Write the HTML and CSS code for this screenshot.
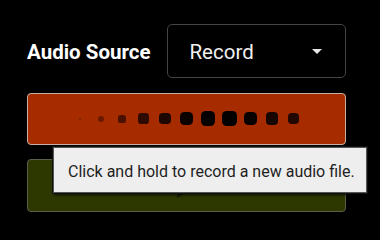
FILE: index.html
```html
<!DOCTYPE html>
<html>
<head>
<meta charset="utf-8">
<link rel="stylesheet" href="styles.css">
</head>
<body>
<div class="panel">
  <div class="row">
    <span class="label">Audio Source</span>
    <div class="select">
      <span class="value">Record</span>
      <span class="caret"></span>
    </div>
  </div>
  <div class="btn rec">
    <span class="slot"><i class="d d1"></i></span>
    <span class="slot"><i class="d d2"></i></span>
    <span class="slot"><i class="d d3"></i></span>
    <span class="slot"><i class="d d4"></i></span>
    <span class="slot"><i class="d d5"></i></span>
    <span class="slot"><i class="d d6"></i></span>
    <span class="slot"><i class="d d7"></i></span>
    <span class="slot"><i class="d d8"></i></span>
    <span class="slot"><i class="d d9"></i></span>
    <span class="slot"><i class="d d10"></i></span>
    <span class="slot"><i class="d d11"></i></span>
  </div>
  <div class="btn play">
    <svg class="playicon" width="20" height="24" viewBox="0 0 20 24"><polygon points="0,0 20,12 0,24" fill="#161c00"/></svg>
  </div>
  <div class="tooltip">Click and hold to record a new audio file.</div>
</div>
</body>
</html>
```
FILE: styles.css
```css
html, body {
  margin: 0;
  padding: 0;
  background: #000;
  width: 380px;
  height: 238px;
  overflow: hidden;
  font-family: Roboto, "Liberation Sans", sans-serif;
}
.panel {
  position: relative;
  padding: 24px 0 0 27px;
  width: 319px;
}
.row {
  display: flex;
  align-items: center;
  height: 54px;
}
.label {
  color: #fff;
  font-weight: bold;
  font-size: 20.5px;
  width: 141px;
  white-space: nowrap;
  padding-top: 1px;
}
.select {
  box-sizing: border-box;
  width: 179px;
  height: 54px;
  border: 1px solid #444;
  border-radius: 5px;
  display: flex;
  align-items: center;
  padding-left: 21px;
  padding-right: 23px;
}
.value {
  color: #f0f0f0;
  font-size: 20.5px;
  flex: 1;
  padding-top: 1px;
}
.caret {
  width: 0;
  height: 0;
  border-left: 5.5px solid transparent;
  border-right: 5.5px solid transparent;
  border-top: 5.5px solid #e8e8e8;
  margin-top: 1px;
}
.btn {
  box-sizing: border-box;
  width: 319px;
  border-radius: 4px;
  display: flex;
  align-items: center;
  justify-content: center;
}
.rec {
  margin-top: 15px;
  height: 52px;
  background: #a62c00;
  border: 1px solid #c8b0a6;
  padding-bottom: 1px;
}
.slot {
  width: 21.4px;
  display: flex;
  justify-content: center;
  align-items: center;
}
.d {
  display: block;
  border-radius: 32%;
}
.d1 { width: 2px; height: 2px; background: #7e2200; }
.d2 { width: 6px; height: 6px; background: #6a1900; border-radius: 50%; }
.d3 { width: 8px; height: 8px; background: #4a1100; }
.d4 { width: 10.5px; height: 10.5px; background: #2e0b00; }
.d5 { width: 11.7px; height: 11.7px; background: #1e0700; }
.d6 { width: 13.3px; height: 13.3px; background: #0c0200; }
.d7 { width: 14.6px; height: 14.6px; background: #050100; }
.d8 { width: 14.6px; height: 14.6px; background: #050100; }
.d9 { width: 13.3px; height: 13.3px; background: #0a0200; }
.d10 { width: 12.7px; height: 12.7px; background: #160500; }
.d11 { width: 11.7px; height: 11.7px; background: #220800; }
.play {
  margin-top: 14px;
  height: 53px;
  background: #2d3800;
  border: 1px solid #5c5e4c;
}
.playicon {
  display: block;
  margin-top: 1px;
}
.tooltip {
  position: absolute;
  left: 53px;
  top: 147px;
  box-sizing: border-box;
  width: 314px;
  height: 46px;
  background: #eeeeee;
  border: 1px solid #555;
  box-shadow: 0 0 0 1px #111, 1px 2px 3px rgba(0,0,0,0.8);
  color: #1e1e1e;
  font-size: 16px;
  line-height: 18px;
  padding: 15px 0 0 14px;
  white-space: nowrap;
}
```
